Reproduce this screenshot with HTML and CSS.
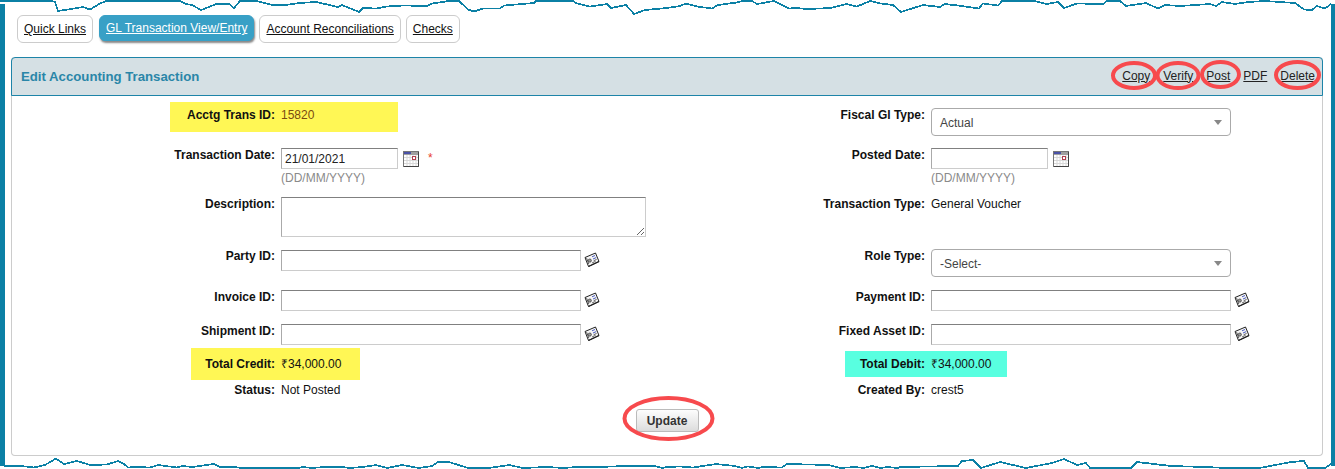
FILE: index.html
```html
<!DOCTYPE html>
<html lang="en">
<head>
<meta charset="utf-8">
<title>Edit Accounting Transaction</title>
<link rel="stylesheet" href="styles.css">
</head>
<body>
<svg class="defs" width="0" height="0" aria-hidden="true">
  <symbol id="cal" viewBox="0 0 16 16">
    <rect x="0.5" y="0.5" width="15" height="15" fill="#fff" stroke="#777"/>
    <path d="M15.5 1v14.5H1" stroke="#444" fill="none"/>
    <rect x="1" y="1" width="14" height="3" fill="#a0a0a0"/>
    <rect x="1" y="1" width="7" height="2" fill="#4a52a8"/>
    <path d="M1 6.5h14M1 9.5h14M1 12.5h14M4 4v11M7 4v11M10 4v11M13 4v11" stroke="#d8d8d8" stroke-width="1" fill="none"/>
    <rect x="9.5" y="5.5" width="3" height="3" fill="#fff" stroke="#b04050"/>
  </symbol>
  <symbol id="card" viewBox="0 0 16 16">
    <path d="M1 5.5 11.5 1 15 9.5 4.5 14.5Z" fill="#f6f6f6" stroke="#222" stroke-width="1"/>
    <path d="M2.6 6.2 4.8 12" stroke="#555" stroke-width="1" fill="none"/>
    <circle cx="5.8" cy="8.6" r="1.6" fill="#999" stroke="#333" stroke-width=".7"/>
    <path d="M8 4.8l3-1.3M9 7l3.2-1.4" stroke="#4a5cc0" stroke-width="1" fill="none"/>
    <path d="M9.6 8.8l3-1.4M8 11l3.6-1.7" stroke="#666" stroke-width="1" fill="none"/>
    <path d="M4.5 14.5 15 9.5" stroke="#222" stroke-width="1.3" fill="none"/>
  </symbol>
</svg>

<div class="frame">
  <nav class="tabs">
    <a class="tab" href="#">Quick Links</a>
    <a class="tab tab-active" href="#">GL Transaction View/Entry</a>
    <a class="tab" href="#">Account Reconciliations</a>
    <a class="tab" href="#">Checks</a>
  </nav>

  <section class="panel">
    <header class="panel-head">
      <h1 class="panel-title">Edit Accounting Transaction</h1>
      <div class="actions">
        <a href="#">Copy</a>
        <a href="#">Verify</a>
        <a href="#">Post</a>
        <a href="#">PDF</a>
        <a href="#">Delete</a>
      </div>
    </header>

    <form class="form">
      <div class="row row-first">
        <div class="side side-left">
          <div class="field hl hl-id">
            <span class="label">Acctg Trans ID:</span>
            <span class="value value-id">15820</span>
          </div>
        </div>
        <div class="side side-right">
          <div class="field field-down">
            <span class="label">Fiscal Gl Type:</span>
            <div class="select">Actual</div>
          </div>
        </div>
      </div>

      <div class="row gap-12 row-dates">
        <div class="side side-left">
          <div class="field">
            <span class="label">Transaction Date:</span>
            <div class="stack">
              <div class="control">
                <input class="input input-date" type="text" value="21/01/2021">
                <svg class="icon icon-cal"><use href="#cal"/></svg>
                <span class="req">*</span>
              </div>
              <span class="hint">(DD/MM/YYYY)</span>
            </div>
          </div>
        </div>
        <div class="side side-right">
          <div class="field">
            <span class="label">Posted Date:</span>
            <div class="stack">
              <div class="control">
                <input class="input input-date" type="text">
                <svg class="icon icon-cal"><use href="#cal"/></svg>
              </div>
              <span class="hint">(DD/MM/YYYY)</span>
            </div>
          </div>
        </div>
      </div>

      <div class="row gap-12">
        <div class="side side-left">
          <div class="field">
            <span class="label">Description:</span>
            <textarea class="area"></textarea>
          </div>
        </div>
        <div class="side side-right">
          <div class="field">
            <span class="label">Transaction Type:</span>
            <span class="value">General Voucher</span>
          </div>
        </div>
      </div>

      <div class="row gap-12">
        <div class="side side-left">
          <div class="field">
            <span class="label">Party ID:</span>
            <div class="control control-down">
              <input class="input input-id" type="text">
              <svg class="icon icon-card"><use href="#card"/></svg>
            </div>
          </div>
        </div>
        <div class="side side-right">
          <div class="field">
            <span class="label">Role Type:</span>
            <div class="select">-Select-</div>
          </div>
        </div>
      </div>

      <div class="row gap-13">
        <div class="side side-left">
          <div class="field">
            <span class="label">Invoice ID:</span>
            <div class="control">
              <input class="input input-id" type="text">
              <svg class="icon icon-card"><use href="#card"/></svg>
            </div>
          </div>
        </div>
        <div class="side side-right">
          <div class="field">
            <span class="label">Payment ID:</span>
            <div class="control">
              <input class="input input-id" type="text">
              <svg class="icon icon-card"><use href="#card"/></svg>
            </div>
          </div>
        </div>
      </div>

      <div class="row gap-13">
        <div class="side side-left">
          <div class="field">
            <span class="label">Shipment ID:</span>
            <div class="control">
              <input class="input input-id" type="text">
              <svg class="icon icon-card"><use href="#card"/></svg>
            </div>
          </div>
        </div>
        <div class="side side-right">
          <div class="field">
            <span class="label">Fixed Asset ID:</span>
            <div class="control">
              <input class="input input-id" type="text">
              <svg class="icon icon-card"><use href="#card"/></svg>
            </div>
          </div>
        </div>
      </div>

      <div class="row gap-3">
        <div class="side side-left">
          <div class="field hl hl-credit">
            <span class="label">Total Credit:</span>
            <span class="value">₹34,000.00</span>
          </div>
        </div>
        <div class="side side-right">
          <div class="field hl hl-debit">
            <span class="label">Total Debit:</span>
            <span class="value">₹34,000.00</span>
          </div>
        </div>
      </div>

      <div class="row gap-3">
        <div class="side side-left">
          <div class="field">
            <span class="label">Status:</span>
            <span class="value">Not Posted</span>
          </div>
        </div>
        <div class="side side-right">
          <div class="field">
            <span class="label">Created By:</span>
            <span class="value">crest5</span>
          </div>
        </div>
      </div>

      <div class="submit-row">
        <button class="btn" type="button">Update</button>
      </div>
    </form>
  </section>
</div>

<svg class="overlay" width="1335" height="469" viewBox="0 0 1335 469" aria-hidden="true">
  <path class="torn" d="M0 1L51 1 55 2 58 11 68 9.5 83 7 90 9.5 99 4 106 1 180 1 186 4 192 5 201 10 209 7 216 4 229 4 234 8 240 1 256 1 273 5 286 5 299 3 316 2 325 4 338 7 342 5 359 12 363 8 376 8.5 387 6.5 404 5.5 427 6 432 3.5 449 1 459 1 468 9.5 474 11.5 483 8.5 500 8.5 504 5.5 534 3 536 1 573 1 577 3.5 590 6.5 607 4 611 8 626 5 634 14 645 10 667 8 680 6 686 3.5 697 6.5 712 8.5 718 5 737 2.5 742 1 752 1 757 4 774 1 789 8.5 795 8 808 9 831 8 846 4 857 6.5 870 1 881 3.5 893 5 901 12 923 5 940 7 945 4 962 6 979 8.5 983 3.5 998 5.5 1002 1 1034 1 1047 4 1058 2 1064 8 1077 3.5 1103 4 1107 1 1120 1 1126 6 1146 3 1158 8.5 1165 5 1180 6 1210 4 1216 6 1222 2 1235 4 1248 2 1265 1 1295 3 1304 9.5 1312 10 1317 6 1325 8.5 1331 4"/>
  <path class="torn" d="M4 466L21 466 34 467.5 45 465 56 458.5 64 464 77 461 90 465 107 464.5 118 461 124 464 128 467.5 137 467 150 467.5 158 465 177 467.5 182 466 192 467 214 464 220 467 235 467 241 468 299 468 303 467 312 468 325 467 342 467 350 468 363 467 376 465 387 468 402 465 419 468 432 466 438 462 449 462 468 468 489 468 509 465 523 468 547 467 564 468 577 467 598 467 626 466 654 466 662 468 667 467 680 466.5 693 467.5 716 464 735 466 742 468 748 466.5 759 468 763 467 782 467.5 787 464 829 465 840 468 855 467 864 468 872 466 881 468 887 467 898 468 900 467 958 466 962 461 973 460 981 468 1000 462 1026 468 1052 463 1064 459 1077 465 1086 463 1090 468 1111 468 1131 468 1137 462 1171 466 1205 467 1227 468 1259 468 1265 467 1291 462 1304 461 1308 468 1325 468 1334 462"/>
  <ellipse class="oval" cx="1134" cy="75.5" rx="21" ry="12.5"/>
  <ellipse class="oval" cx="1178" cy="75.5" rx="20.5" ry="12.5"/>
  <ellipse class="oval" cx="1220.5" cy="74.5" rx="18.5" ry="12.5"/>
  <ellipse class="oval" cx="1297.5" cy="75" rx="21.5" ry="13"/>
  <ellipse class="oval oval-big" cx="668.5" cy="418.5" rx="44" ry="20.5"/>
</svg>
</body>
</html>
```

FILE: styles.css
```css
* { box-sizing: border-box; }

html, body {
  margin: 0;
  height: 469px;
  overflow: hidden;
  background: #fff;
}

body {
  position: relative;
  font-family: "Liberation Sans", Arial, sans-serif;
  font-size: 12px;
  color: #111;
}

.defs { position: absolute; }

.frame {
  height: 462px;
  margin-top: 4px;
  padding: 11px 8px 0 6px;
  border-left: 5px solid #0b80a5;
  border-right: 4px solid #0b80a5;
}

/* Tabs */
.tabs {
  display: flex;
  align-items: flex-start;
  gap: 5px;
  margin-left: 6px;
  margin-bottom: 14px;
  height: 28px;
}

.tab {
  height: 28px;
  padding: 0 6px;
  line-height: 27px;
  border: 1px solid #ccc;
  border-radius: 6px;
  color: #111;
  background: #fff;
  text-decoration: underline;
  white-space: nowrap;
}

.tab-active {
  height: 26px;
  margin-left: 1px;
  line-height: 24px;
  border-color: #38a0c6;
  background: #38a0c6;
  color: #fff;
  box-shadow: 1px 2px 2px #888;
}

/* Panel */
.panel {
  height: 399px;
  border: 1px solid #ccc;
  border-top: 0;
  border-radius: 4px;
}

.panel-head {
  display: flex;
  align-items: center;
  justify-content: space-between;
  height: 39px;
  margin: 0 -1px;
  padding: 0 7px 0 9px;
  background: #d5e0e4;
  border: 1px solid #1d84a8;
  border-radius: 4px 4px 0 0;
}

.panel-title {
  margin: 0;
  font-size: 13.2px;
  font-weight: bold;
  color: #2a86a8;
}

.actions {
  display: flex;
  gap: 13px;
  padding-bottom: 2px;
}

.actions a {
  color: #222;
  text-decoration: underline;
}

/* Form layout */
.form {
  padding-top: 6px;
}

.row {
  display: flex;
  align-items: flex-start;
}

.row-first { height: 34px; }
.row-dates { height: 37px; }
.gap-3 { margin-top: 3px; }
.gap-12 { margin-top: 12px; }
.gap-13 { margin-top: 13px; }

.side-left { flex: 0 0 638px; }
.side-right { flex: 1; }

.field {
  display: flex;
  align-items: flex-start;
  gap: 6px;
}

.field-down { margin-top: 6px; }

.label {
  flex: 0 0 auto;
  width: 263px;
  line-height: 15px;
  font-weight: bold;
  text-align: right;
  color: #111;
}

.side-right .label { width: 275px; }

.value {
  line-height: 15px;
  color: #111;
}

.value-id { color: #7a4a10; }

/* Highlighted fields */
.hl-id {
  margin-left: 158px;
  width: 228px;
  height: 30px;
  padding-top: 6px;
  background: #fff755;
}
.hl-id .label { width: 105px; }

.hl-credit {
  margin-left: 179px;
  width: 169px;
  height: 32px;
  padding-top: 9px;
  background: #fff755;
}
.hl-credit .label { width: 84px; }

.hl-debit {
  margin-top: 3px;
  margin-left: 195px;
  width: 162px;
  height: 26px;
  padding-top: 6px;
  background: #58ffe0;
}
.side-right .hl-debit .label { width: 80px; }

/* Controls */
.stack {
  display: flex;
  flex-direction: column;
  gap: 2px;
}

.control {
  display: flex;
  align-items: flex-start;
}

.control-down { margin-top: 1px; }

.input,
.area {
  margin: 0;
  padding: 0 3px;
  font-family: inherit;
  font-size: 12px;
  color: #222;
  background: #fff;
  border: 1px solid;
  border-color: #808080 #ccc #ccc #aaa;
  outline: 0;
}

.input { height: 21px; }
.input-date { width: 117px; }
.input-id { width: 300px; }

.area {
  display: block;
  width: 365px;
  height: 40px;
}

.hint {
  line-height: 15px;
  color: #8a8a8a;
}

.icon {
  flex: 0 0 auto;
  width: 16px;
  height: 16px;
}

.icon-cal { margin: 3px 0 0 5px; }
.icon-card { margin: 2px 0 0 3px; }

.req {
  margin: 4px 0 0 9px;
  line-height: 13px;
  color: #e8402a;
}

.select {
  position: relative;
  width: 300px;
  height: 28px;
  padding-left: 8px;
  line-height: 28px;
  color: #444;
  background: #fff;
  border: 1px solid #aaa;
  border-radius: 4px;
}

.select::after {
  content: "";
  position: absolute;
  top: 11px;
  right: 8px;
  border-style: solid;
  border-width: 5px 4px 0;
  border-color: #888 transparent transparent;
}

/* Submit */
.submit-row {
  display: flex;
  justify-content: center;
  margin-top: 11px;
}

.btn {
  width: 63px;
  height: 23px;
  padding: 0;
  font-family: inherit;
  font-size: 12px;
  font-weight: bold;
  color: #333;
  background: linear-gradient(#fdfdfd, #dcdcdc);
  border: 1px solid #bbb;
  border-radius: 3px;
}

/* Annotation layer */
.overlay {
  position: absolute;
  left: 0;
  top: 0;
  pointer-events: none;
}

.torn {
  fill: none;
  stroke: #0b80a5;
  stroke-width: 1.7;
  shape-rendering: crispEdges;
}

.oval {
  fill: none;
  stroke: #f74a4d;
  stroke-width: 4;
}
```
